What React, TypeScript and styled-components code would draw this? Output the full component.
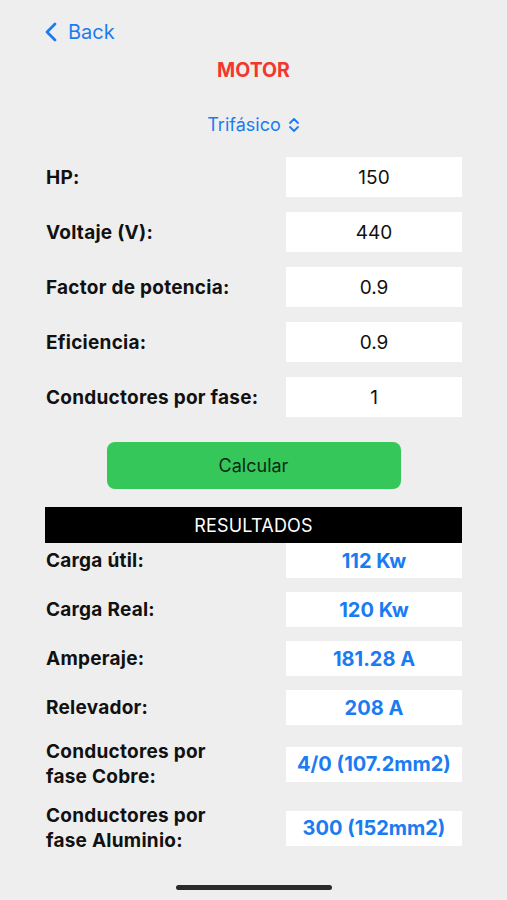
import styled, { createGlobalStyle } from "styled-components";

const GlobalStyle = createGlobalStyle`
  html, body {
    margin: 0;
    padding: 0;
    background: #eeeeee;
  }
  body {
    font-family: Inter, "Noto Sans", "Liberation Sans", sans-serif;
    -webkit-font-smoothing: antialiased;
  }
`;

const Screen = styled.div`
  width: 507px;
  height: 900px;
  background: #eeeeee;
  display: flex;
  flex-direction: column;
  overflow: hidden;
`;

const NavBar = styled.div`
  height: 64px;
  display: flex;
  align-items: center;
  padding: 0 0 0 44px;
`;

const BackButton = styled.button`
  display: flex;
  align-items: center;
  gap: 10px;
  background: none;
  border: none;
  padding: 0;
  color: #1b7cf2;
  font-family: inherit;
  font-size: 20px;
  cursor: pointer;
`;

const Title = styled.h1`
  margin: -7px 0 0;
  text-align: center;
  color: #f2382e;
  font-size: 19.5px;
  font-weight: 700;
  line-height: 26px;
`;

const Picker = styled.div`
  margin-top: 30px;
  display: flex;
  justify-content: center;
  align-items: center;
  gap: 7px;
  color: #1b7cf2;
  font-size: 18px;
  line-height: 24px;
`;

const Content = styled.div`
  padding: 0 45px;
  display: flex;
  flex-direction: column;
`;

const InputList = styled.div`
  margin-top: 20px;
  display: flex;
  flex-direction: column;
  gap: 15px;
`;

const Row = styled.div`
  display: grid;
  grid-template-columns: 241px 176px;
  align-items: center;
`;

const Label = styled.div`
  padding-left: 1px;
  font-size: 19px;
  font-weight: 700;
  letter-spacing: 0.25px;
  color: #111;
  line-height: 25px;
`;

const InputBox = styled.div`
  height: 40px;
  background: #ffffff;
  display: flex;
  align-items: center;
  justify-content: center;
  font-size: 19px;
  color: #111;
`;

const CalcButton = styled.button`
  align-self: center;
  margin-top: 25px;
  width: 294px;
  height: 47px;
  border: none;
  border-radius: 8px;
  background: #36c75b;
  color: #0c2a14;
  font-family: inherit;
  font-size: 18px;
  cursor: pointer;
`;

const ResultsHeader = styled.div`
  margin-top: 18px;
  height: 36px;
  background: #000;
  color: #fff;
  display: flex;
  align-items: center;
  justify-content: center;
  font-size: 18px;
  letter-spacing: 0.2px;
`;

const ResultList = styled.div`
  display: flex;
  flex-direction: column;
  gap: 14px;
`;

const ResultBox = styled.div`
  height: 35px;
  background: #ffffff;
  display: flex;
  align-items: center;
  justify-content: center;
  font-size: 20px;
  font-weight: 700;
  color: #1b7cf2;
`;

const HomeBar = styled.div`
  margin: auto auto 10px;
  width: 156px;
  height: 5px;
  border-radius: 3px;
  background: #2a2a2a;
`;

const ChevronLeft = () => (
  <svg width="14" height="20" viewBox="0 0 14 20" fill="none">
    <path d="M11 2L3 10l8 8" stroke="#1b7cf2" strokeWidth="2.8" strokeLinecap="round" strokeLinejoin="round" />
  </svg>
);

const UpDown = () => (
  <svg width="12" height="16" viewBox="0 0 12 16" fill="none">
    <path d="M2 6l4-4 4 4M2 10l4 4 4-4" stroke="#1b7cf2" strokeWidth="1.8" strokeLinecap="round" strokeLinejoin="round" />
  </svg>
);

const inputs = [
  { label: "HP:", value: "150" },
  { label: "Voltaje (V):", value: "440" },
  { label: "Factor de potencia:", value: "0.9" },
  { label: "Eficiencia:", value: "0.9" },
  { label: "Conductores por fase:", value: "1" },
];

const results = [
  { label: "Carga útil:", value: "112 Kw" },
  { label: "Carga Real:", value: "120 Kw" },
  { label: "Amperaje:", value: "181.28 A" },
  { label: "Relevador:", value: "208 A" },
  { label: "Conductores por\nfase Cobre:", value: "4/0 (107.2mm2)" },
  { label: "Conductores por\nfase Aluminio:", value: "300 (152mm2)" },
];

export default function App() {
  return (
    <Screen>
      <GlobalStyle />
      <NavBar>
        <BackButton>
          <ChevronLeft />
          Back
        </BackButton>
      </NavBar>
      <Title>MOTOR</Title>
      <Picker>
        Trifásico
        <UpDown />
      </Picker>
      <Content>
        <InputList>
          {inputs.map((r) => (
            <Row key={r.label}>
              <Label>{r.label}</Label>
              <InputBox>{r.value}</InputBox>
            </Row>
          ))}
        </InputList>
        <CalcButton>Calcular</CalcButton>
        <ResultsHeader>RESULTADOS</ResultsHeader>
        <ResultList>
          {results.map((r) => (
            <Row key={r.label}>
              <Label>
                {r.label.split("\n").map((line) => (
                  <div key={line}>{line}</div>
                ))}
              </Label>
              <ResultBox>{r.value}</ResultBox>
            </Row>
          ))}
        </ResultList>
      </Content>
      <HomeBar />
    </Screen>
  );
}
